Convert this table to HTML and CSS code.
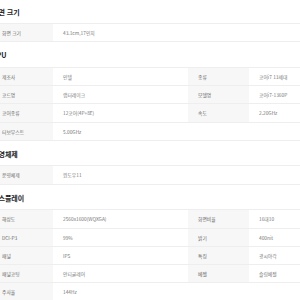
FILE: index.html
```html
<!DOCTYPE html>
<html lang="ko">
<head>
<meta charset="utf-8">
<link rel="stylesheet" href="styles.css">
</head>
<body>
<div class="spec">
  <section class="group">
    <h3 class="group-title">화면 크기</h3>
    <div class="table">
      <div class="row">
        <div class="label">화면 크기</div><div class="value">43.1cm,17인치</div>
        <div class="label blank"></div><div class="value"></div>
      </div>
    </div>
  </section>
  <section class="group">
    <h3 class="group-title">CPU</h3>
    <div class="table">
      <div class="row">
        <div class="label">제조사</div><div class="value">인텔</div>
        <div class="label">종류</div><div class="value">코어i7 13세대</div>
      </div>
      <div class="row">
        <div class="label">코드명</div><div class="value">랩터레이크</div>
        <div class="label">모델명</div><div class="value">코어i7-1360P</div>
      </div>
      <div class="row">
        <div class="label">코어종류</div><div class="value">12코어(4P+8E)</div>
        <div class="label">속도</div><div class="value">2.20GHz</div>
      </div>
      <div class="row">
        <div class="label">터보부스트</div><div class="value">5.00GHz</div>
        <div class="label blank"></div><div class="value"></div>
      </div>
    </div>
  </section>
  <section class="group">
    <h3 class="group-title">운영체제</h3>
    <div class="table">
      <div class="row">
        <div class="label">운영체제</div><div class="value">윈도우11</div>
        <div class="label blank"></div><div class="value"></div>
      </div>
    </div>
  </section>
  <section class="group">
    <h3 class="group-title">디스플레이</h3>
    <div class="table">
      <div class="row">
        <div class="label">해상도</div><div class="value">2560x1600(WQXGA)</div>
        <div class="label">화면비율</div><div class="value">16대10</div>
      </div>
      <div class="row">
        <div class="label">DCI-P3</div><div class="value">99%</div>
        <div class="label">밝기</div><div class="value">400nit</div>
      </div>
      <div class="row">
        <div class="label">패널</div><div class="value">IPS</div>
        <div class="label">특징</div><div class="value">광시야각</div>
      </div>
      <div class="row">
        <div class="label">패널코팅</div><div class="value">안티글레어</div>
        <div class="label">베젤</div><div class="value">슬림베젤</div>
      </div>
      <div class="row">
        <div class="label">주사율</div><div class="value">144Hz</div>
        <div class="label blank"></div><div class="value"></div>
      </div>
    </div>
  </section>
</div>
</body>
</html>
```
FILE: styles.css
```css
html, body {
  margin: 0;
  padding: 0;
  background: #fff;
  overflow: hidden;
}
body {
  font-family: "Noto Sans CJK KR", "Noto Sans", sans-serif;
  color: #333;
}
.spec {
  width: 392px;
  margin-left: -8px;
  margin-top: -1.5px;
}
.group-title {
  margin: 0;
  padding: 9px 0 6.5px;
  height: 9px;
  line-height: 9px;
  font-size: 7px;
  font-weight: 700;
  color: #222;
}
.table {
  border-bottom: 1px solid #eeeeee;
}
.row {
  display: grid;
  grid-template-columns: 61px 135px 61px 135px;
  height: 18.3px;
  border-top: 1px solid #eeeeee;
  box-sizing: border-box;
  font-size: 4.8px;
  line-height: 17.3px;
}
.label {
  background: #f7f7f7;
  color: #666;
  padding-left: 10px;
  white-space: nowrap;
}
.label.blank {
  background: #fff;
}
.value {
  color: #777;
  padding-left: 10px;
  white-space: nowrap;
}
```
